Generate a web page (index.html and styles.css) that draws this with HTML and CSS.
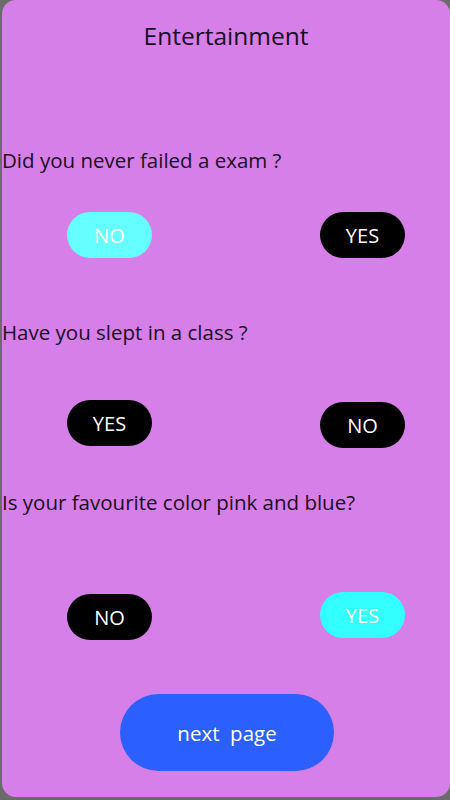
FILE: index.html
```html
<html>

<head>
    <title>Entertainment</title>
    <link rel="stylesheet" href="styles.css">
</head>

<body>
    <div class="card">
        <h1 class="title">Entertainment</h1>

        <p class="question q1">Did you never failed a exam ?</p>
        <div class="answers row1">
            <button class="btn btn-light">NO</button>
            <button class="btn btn-dark">YES</button>
        </div>

        <p class="question q2">Have you slept in a class ?</p>
        <div class="answers row2">
            <button class="btn btn-dark">YES</button>
            <button class="btn btn-dark low">NO</button>
        </div>

        <p class="question q3">Is your favourite color pink and blue?</p>
        <div class="answers row3">
            <button class="btn btn-dark low">NO</button>
            <button class="btn btn-cyan">YES</button>
        </div>

        <div class="footer">
            <button class="btn-next">next&nbsp; page</button>
        </div>
    </div>
</body>

</html>
```
FILE: styles.css
```css
body {
    font-family: "Open Sans", "Noto Sans", sans-serif;
    margin: 0;
    padding: 0;
    background-color: #6b6b6b;
}

.card {
    display: flex;
    flex-direction: column;
    width: 448px;
    height: 797px;
    margin-left: 2px;
    background-color: #d77fe8;
    border-radius: 14px;
    color: #1a0d26;
}

.title {
    margin: 0;
    padding-top: 21px;
    font-size: 24.5px;
    line-height: 30px;
    font-weight: normal;
    text-align: center;
}

.question {
    margin: 0;
    font-size: 20.5px;
    line-height: 26px;
}

.q1 {
    margin-top: 96px;
}

.q2 {
    margin-top: 61px;
}

.q3 {
    margin-top: 41px;
}

.answers {
    display: flex;
    justify-content: space-between;
    align-items: flex-start;
    padding: 0 45px 0 65px;
}

.row1 {
    margin-top: 39px;
}

.row2 {
    margin-top: 55px;
}

.row3 {
    margin-top: 77px;
}

.btn {
    width: 85px;
    height: 46px;
    border: none;
    border-radius: 23px;
    font-family: inherit;
    font-size: 20px;
    color: #ffffff;
    cursor: pointer;
}

.btn-dark {
    background-color: #000000;
}

.btn-light {
    background-color: #66ffff;
}

.btn-cyan {
    background-color: #33ffff;
}

.low {
    margin-top: 2px;
}

.footer {
    display: flex;
    justify-content: center;
    margin-top: 54px;
    padding-left: 2px;
}

.btn-next {
    width: 214px;
    height: 77px;
    border: none;
    border-radius: 39px;
    background-color: #2b5fff;
    color: #ffffff;
    font-family: inherit;
    font-size: 20.5px;
    cursor: pointer;
}
```
